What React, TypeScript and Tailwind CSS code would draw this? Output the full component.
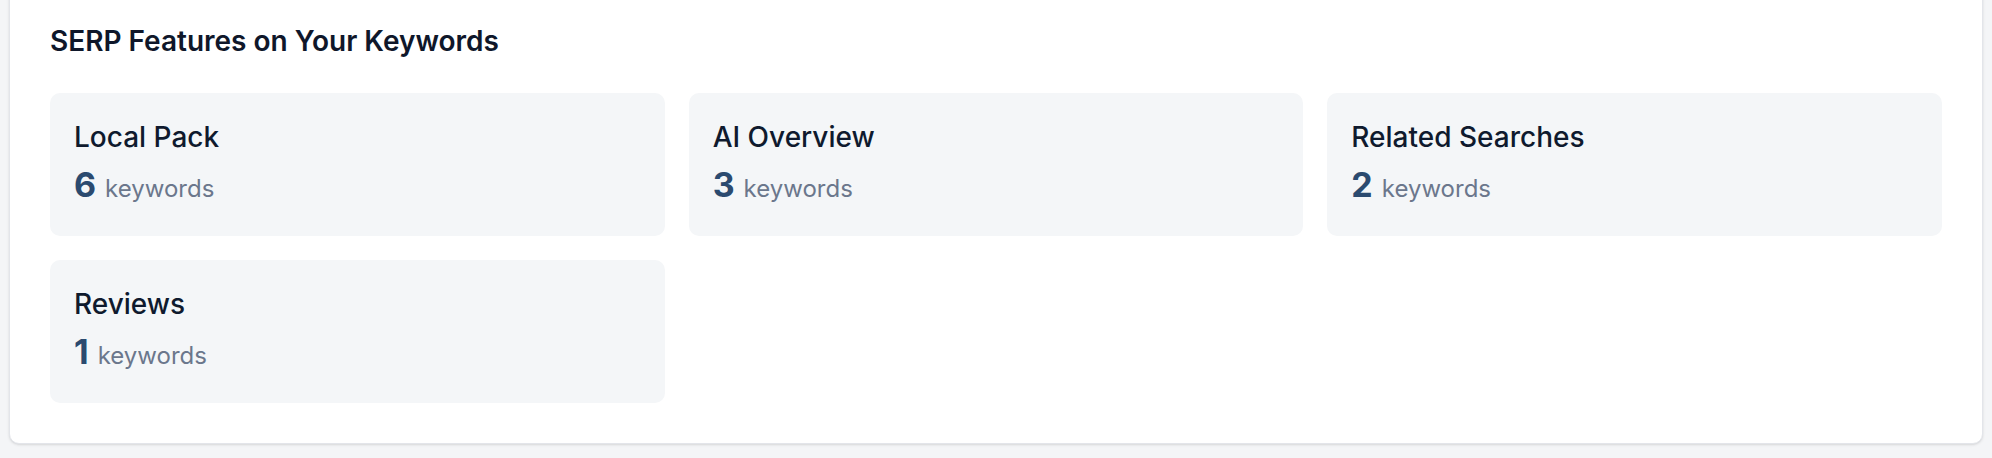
import React from 'react';

type SerpFeature = {
  name: string;
  count: number;
};

const features: SerpFeature[] = [
  { name: 'Local Pack', count: 6 },
  { name: 'AI Overview', count: 3 },
  { name: 'Related Searches', count: 2 },
  { name: 'Reviews', count: 1 },
];

function FeatureCard({ feature }: { feature: SerpFeature }) {
  return (
    <div className="rounded-[10px] bg-[#f4f6f8] px-6 pt-[26px] pb-[31px]">
      <div className="text-[28px] leading-[36px] font-medium text-[#0f1a2e]">{feature.name}</div>
      <div className="mt-[10px] flex h-10 items-baseline gap-[9px]">
        <span className="text-[34px] leading-[40px] font-bold text-[#2b4a6f]">{feature.count}</span>
        <span className="text-[24px] leading-none text-[#6b778c]">keywords</span>
      </div>
    </div>
  );
}

export default function App() {
  return (
    <div
      className="h-[458px] overflow-hidden bg-[#f4f5f7] px-[9px]"
      style={{ fontFamily: 'Inter, "Noto Sans", sans-serif' }}
    >
      <section className="-mt-4 rounded-[10px] border border-[#e3e5ea] bg-white p-10 shadow-sm">
        <h2 className="mb-9 text-[28px] leading-8 font-semibold text-[#0f172a]">
          SERP Features on Your Keywords
        </h2>
        <div className="grid grid-cols-3 gap-6">
          {features.map((f) => (
            <FeatureCard key={f.name} feature={f} />
          ))}
        </div>
      </section>
    </div>
  );
}
